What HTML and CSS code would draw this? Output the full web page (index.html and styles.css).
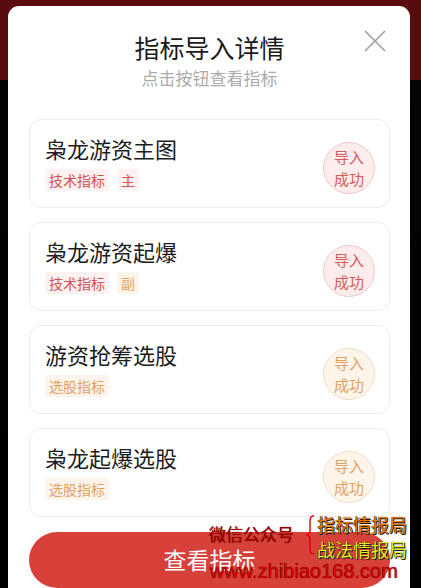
FILE: index.html
```html
<!DOCTYPE html>
<html lang="zh-CN">
<head>
    <meta charset="UTF-8">
    <meta name="viewport" content="width=device-width, initial-scale=1.0">
    <title>指标导入详情</title>
    <link rel="stylesheet" href="styles.css">
</head>
<body>
    <div class="backdrop">
        <div class="modal">
            <div class="modal-header">
                <h1>指标导入详情</h1>
                <p>点击按钮查看指标</p>
                <button class="btn-close" aria-label="关闭">
                    <svg width="22" height="22" viewBox="0 0 22 22">
                        <path d="M1 1 L21 21 M21 1 L1 21" stroke="#a0a0a0" stroke-width="1.6" fill="none"/>
                    </svg>
                </button>
            </div>

            <div class="card-list">
                <div class="card">
                    <div class="card-info">
                        <h2>枭龙游资主图</h2>
                        <div class="tags">
                            <span class="tag tag-red">技术指标</span>
                            <span class="tag tag-red">主</span>
                        </div>
                    </div>
                    <div class="status status-red">导入<br>成功</div>
                </div>

                <div class="card">
                    <div class="card-info">
                        <h2>枭龙游资起爆</h2>
                        <div class="tags">
                            <span class="tag tag-red">技术指标</span>
                            <span class="tag tag-orange">副</span>
                        </div>
                    </div>
                    <div class="status status-red">导入<br>成功</div>
                </div>

                <div class="card">
                    <div class="card-info">
                        <h2>游资抢筹选股</h2>
                        <div class="tags">
                            <span class="tag tag-orange">选股指标</span>
                        </div>
                    </div>
                    <div class="status status-orange">导入<br>成功</div>
                </div>

                <div class="card">
                    <div class="card-info">
                        <h2>枭龙起爆选股</h2>
                        <div class="tags">
                            <span class="tag tag-orange">选股指标</span>
                        </div>
                    </div>
                    <div class="status status-orange">导入<br>成功</div>
                </div>
            </div>

            <button class="btn-view">查看指标</button>
        </div>
    </div>

    <div class="watermark">
        <span class="wm-wechat">微信公众号</span>
        <svg class="wm-brace" width="10" height="40" viewBox="0 0 10 40">
            <path d="M9 1 C5 1 5 3 5 8 L5 16 C5 19 4 20 1 20 C4 20 5 21 5 24 L5 32 C5 37 5 39 9 39" stroke="#e00000" stroke-width="1.4" fill="none"/>
        </svg>
        <div class="wm-names">
            <span class="wm-orange">指标情报局</span>
            <span class="wm-yellow">战法情报局</span>
        </div>
        <span class="wm-url">www.zhibiao168.com</span>
    </div>
</body>
</html>
```

FILE: styles.css
```css
* {
    margin: 0;
    padding: 0;
    box-sizing: border-box;
}

body {
    font-family: "Noto Sans CJK SC", "Noto Sans", sans-serif;
    background: #000;
    width: 421px;
    height: 588px;
    overflow: hidden;
    position: relative;
}

.backdrop {
    height: 588px;
    background: linear-gradient(180deg, #5a0b0e 0, #5a0b0e 80px, #050505 80px, #000 100%);
    padding: 6px 11px 0 8px;
}

.modal {
    position: relative;
    background: #fff;
    border-radius: 11px 11px 0 0;
    height: 582px;
    padding: 0 20px 0 21px;
}

.modal-header {
    text-align: center;
    padding-top: 26px;
}

.modal-header h1 {
    font-size: 25px;
    line-height: 30px;
    font-weight: 400;
    color: #1a1a1a;
}

.modal-header p {
    margin-top: 5px;
    font-size: 17px;
    line-height: 22px;
    color: #ababab;
}

.btn-close {
    position: absolute;
    top: 24px;
    right: 24px;
    width: 22px;
    height: 22px;
    border: none;
    background: none;
    display: flex;
}

.card-list {
    margin-top: 30px;
    display: flex;
    flex-direction: column;
    gap: 14px;
}

.card {
    height: 89px;
    border: 1px solid #ededed;
    border-radius: 12px;
    padding: 15px 14px 0 15px;
    display: flex;
    justify-content: space-between;
    align-items: flex-start;
}

.card-info h2 {
    font-size: 22px;
    line-height: 26px;
    font-weight: 400;
    color: #1c1c1c;
}

.tags {
    margin-top: 8px;
    display: flex;
    gap: 8px;
}

.tag {
    height: 22px;
    line-height: 22px;
    font-size: 14px;
    padding: 0 4px;
    border-radius: 3px;
}

.tag-red {
    color: #d6504c;
    background: #fdf1f1;
}

.tag-orange {
    color: #e3a060;
    background: #fdf5ec;
}

.status {
    margin-top: 7px;
    width: 52px;
    height: 52px;
    border-radius: 50%;
    font-size: 15px;
    line-height: 22px;
    text-align: center;
    display: flex;
    align-items: center;
    justify-content: center;
}

.status-red {
    color: #d45c5c;
    background: #fcecec;
    border: 1px solid #f0c9c9;
}

.status-orange {
    color: #e2a264;
    background: #fdf4ea;
    border: 1px solid #f3dcc6;
}

.btn-view {
    margin-top: 15px;
    width: 100%;
    height: 56px;
    border: none;
    border-radius: 28px;
    background: #d8403a;
    color: #fff;
    font-family: inherit;
    font-size: 23px;
    padding-bottom: 2px;
}

.watermark {
    position: absolute;
    left: 209px;
    top: 512px;
    width: 210px;
    height: 72px;
    font-family: "Noto Sans CJK SC", sans-serif;
}

.wm-wechat {
    position: absolute;
    left: 0;
    top: 11px;
    font-size: 17px;
    line-height: 22px;
    color: #a80000;
    text-shadow: 0 0 1px #300;
}

.wm-brace {
    position: absolute;
    left: 96px;
    top: 3px;
}

.wm-names {
    position: absolute;
    left: 108px;
    top: 0;
    display: flex;
    flex-direction: column;
}

.wm-names span {
    font-size: 18px;
    line-height: 25px;
    text-shadow: 0 0 1px #000, 1px 1px 0 #222;
}

.wm-orange {
    color: #e87800;
}

.wm-yellow {
    color: #ecec20;
}

.wm-url {
    position: absolute;
    left: 1px;
    top: 48px;
    font-family: "Liberation Sans", sans-serif;
    font-size: 20px;
    line-height: 22px;
    color: #d40000;
    text-shadow: 0 0 1px #300;
}
```
